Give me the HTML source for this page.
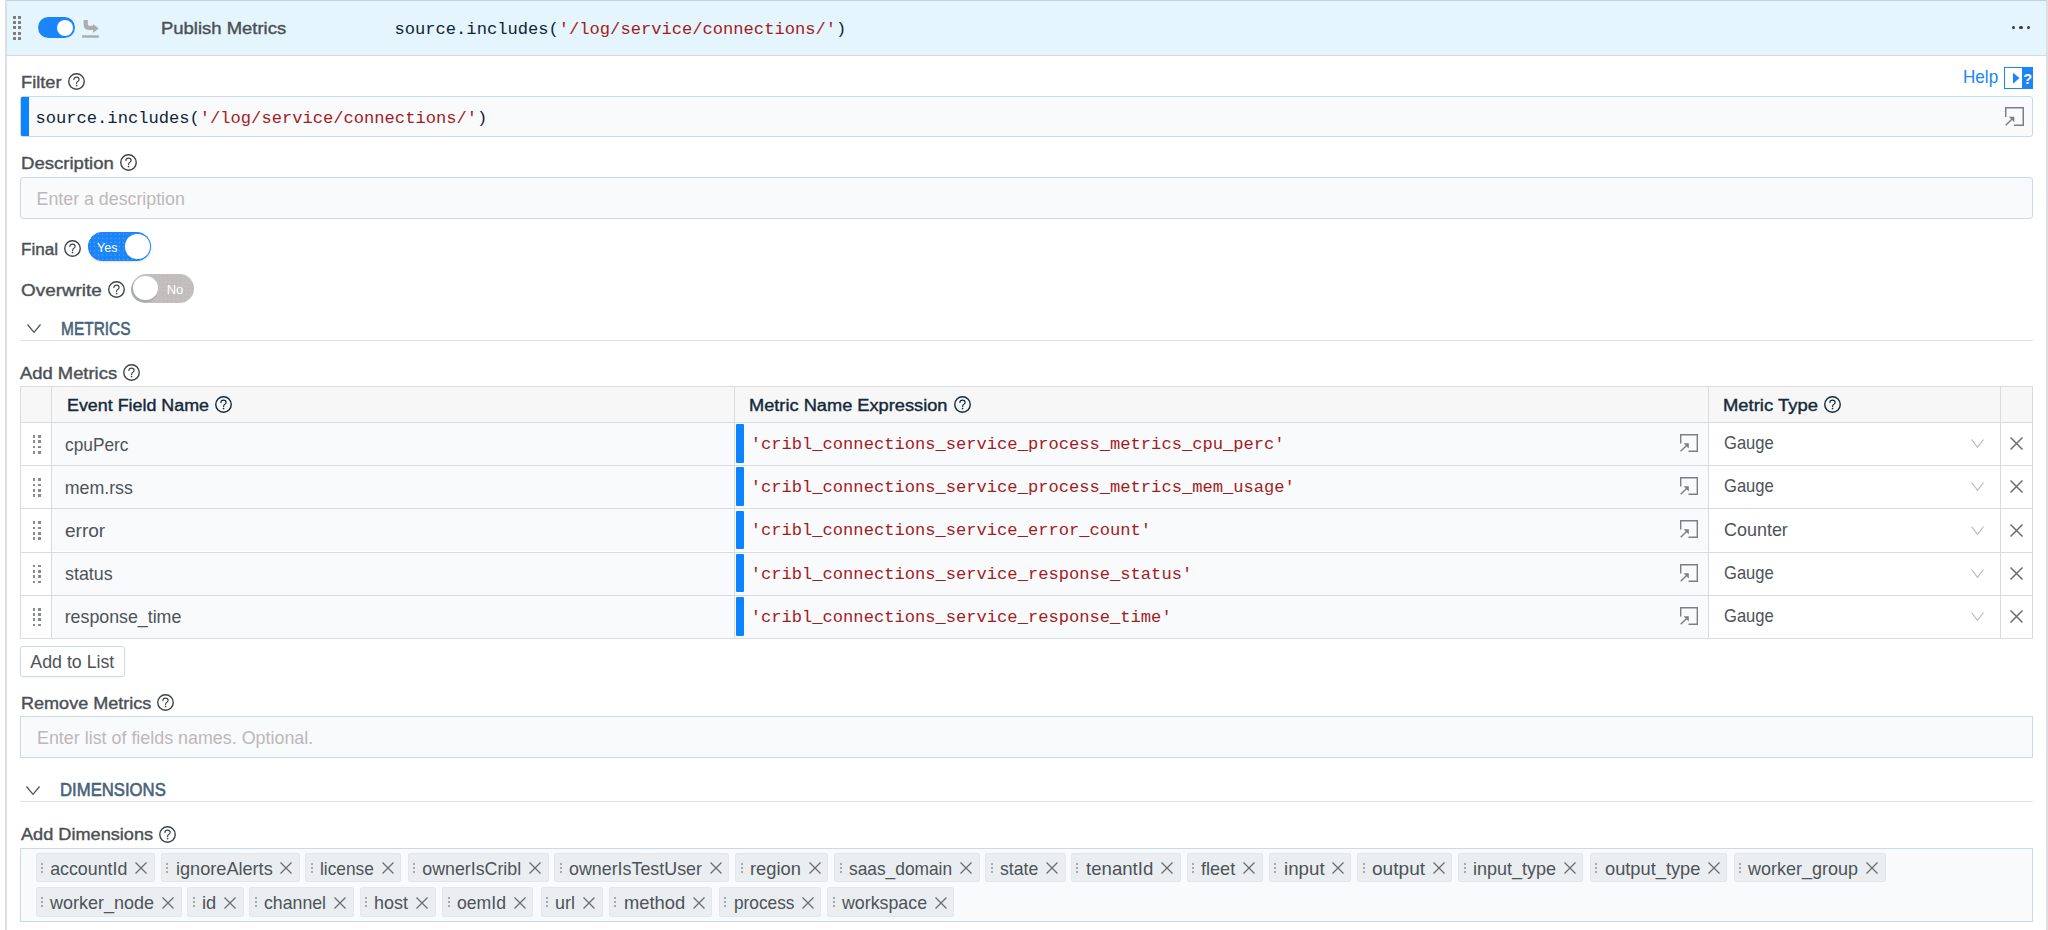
<!DOCTYPE html>
<html><head><meta charset="utf-8"><style>
html,body{margin:0;padding:0;background:#fff;width:2048px;height:930px;overflow:hidden;position:relative}
.t{position:absolute;white-space:nowrap;line-height:0;font-family:'Liberation Sans', sans-serif}
.b{position:absolute;display:block}
</style></head><body>
<div class="b" style="left:5px;top:0px;width:2px;height:930px;background:#dedfe0"></div>
<div class="b" style="left:2046px;top:0px;width:2px;height:930px;background:#dedfe0"></div>
<div class="b" style="left:7px;top:0px;width:2039px;height:55px;background:#e4f5fd"></div>
<div class="b" style="left:7px;top:0px;width:2039px;height:1px;background:#c6ced6"></div>
<div class="b" style="left:7px;top:55px;width:2039px;height:1px;background:#d6dadd"></div>
<div class="b" style="left:13px;top:16px;width:3px;height:3px;background:#7d7f81"></div>
<div class="b" style="left:13px;top:21.2px;width:3px;height:3px;background:#7d7f81"></div>
<div class="b" style="left:13px;top:26.4px;width:3px;height:3px;background:#7d7f81"></div>
<div class="b" style="left:13px;top:31.6px;width:3px;height:3px;background:#7d7f81"></div>
<div class="b" style="left:13px;top:36.8px;width:3px;height:3px;background:#7d7f81"></div>
<div class="b" style="left:18px;top:16px;width:3px;height:3px;background:#7d7f81"></div>
<div class="b" style="left:18px;top:21.2px;width:3px;height:3px;background:#7d7f81"></div>
<div class="b" style="left:18px;top:26.4px;width:3px;height:3px;background:#7d7f81"></div>
<div class="b" style="left:18px;top:31.6px;width:3px;height:3px;background:#7d7f81"></div>
<div class="b" style="left:18px;top:36.8px;width:3px;height:3px;background:#7d7f81"></div>
<div class="b" style="left:38px;top:17px;width:37px;height:21px;background:#1a84f8;border-radius:11px"></div>
<div class="b" style="left:57px;top:20px;width:16px;height:16px;background:#fff;border-radius:50%"></div>
<svg class="b" style="left:78px;top:16px" width="26" height="26" viewBox="0 0 26 26"><path d="M7.7 3.9V8.5C7.7 10.8 9.3 11.9 11.5 11.9H16" fill="none" stroke="#a9adb0" stroke-width="4.2"/><path d="M15.1 8.1L20.8 12.4L15.1 16.8Z" fill="#a9adb0"/><rect x="4.1" y="19.3" width="16.7" height="2.4" fill="#a9adb0"/></svg>
<div class="t" style="left:161.20px;top:27.90px;font-size:17.3px;color:#4b5055;font-family:'Liberation Sans', sans-serif;-webkit-text-stroke:0.4px #4b5055;transform:scaleX(1.0683);transform-origin:0 0;">Publish Metrics</div>
<div class="t" style="left:394.50px;top:30.24px;font-size:17.12px;color:#0f2536;font-family:'Liberation Mono', monospace;">source.includes(<span style="color:#a31c1c">'/log/service/connections/'</span>)</div>
<div class="b" style="left:2012px;top:25.8px;width:3.2px;height:3.2px;background:#3a3d40;border-radius:50%"></div>
<div class="b" style="left:2019.4px;top:25.8px;width:3.2px;height:3.2px;background:#3a3d40;border-radius:50%"></div>
<div class="b" style="left:2026.8px;top:25.8px;width:3.2px;height:3.2px;background:#3a3d40;border-radius:50%"></div>
<div class="t" style="left:20.90px;top:81.90px;font-size:17.3px;color:#4b5055;font-family:'Liberation Sans', sans-serif;-webkit-text-stroke:0.4px #4b5055;transform:scaleX(1.0559);transform-origin:0 0;">Filter</div>
<svg class="b" style="left:67.60px;top:72.85px" width="17" height="17" viewBox="0 0 17 17"><circle cx="8.5" cy="8.5" r="7.75" fill="none" stroke="#3f4448" stroke-width="1.4"/><path d="M5.9 6.6C5.9 5 7 4.1 8.5 4.1S11.1 5 11.1 6.4C11.1 7.7 10 8.1 9.2 8.8C8.7 9.3 8.6 9.8 8.6 10.7" fill="none" stroke="#3f4448" stroke-width="1.15" stroke-linecap="round"/><rect x="7.8" y="12" width="1.5" height="1.3" fill="#3f4448"/></svg>
<div class="t" style="left:1962.80px;top:77.03px;font-size:17.8px;color:#1a84f8;font-family:'Liberation Sans', sans-serif;transform:scaleX(0.9611);transform-origin:0 0;">Help</div>
<div class="b" style="left:2004px;top:67px;width:29px;height:22px;box-sizing:border-box;border:1.5px solid #1a84f8;background:#fff"></div>
<div class="b" style="left:2022px;top:67px;width:11px;height:22px;background:#1a84f8"></div>
<svg class="b" style="left:2004px;top:67px" width="29" height="22" viewBox="0 0 29 22"><path d="M9 5.8L15.5 11L9 16.8Z" fill="#1a84f8"/><text x="23.7" y="17.2" text-anchor="middle" font-family="Liberation Sans" font-weight="bold" font-size="14.5" fill="#fff">?</text></svg>
<div class="b" style="left:20px;top:96px;width:2013px;height:41px;box-sizing:border-box;border:1.3px solid #cbd9e2;border-radius:3px;background:#f9fafc"></div>
<div class="b" style="left:21.2px;top:97.2px;width:7.8px;height:38.6px;background:#0d84ff;border-radius:1px 0 0 1px"></div>
<div class="t" style="left:35.50px;top:118.64px;font-size:17.12px;color:#0f2536;font-family:'Liberation Mono', monospace;">source.includes(<span style="color:#a31c1c">'/log/service/connections/'</span>)</div>
<svg class="b" style="left:2005px;top:107px" width="19" height="19" viewBox="0 0 18 18"><path d="M0.7 9.5V0.7H17.3V17.3H8.5" fill="none" stroke="#7b7f83" stroke-width="1.4"/><path d="M0.7 17.3L7.6 10.4" fill="none" stroke="#7b7f83" stroke-width="1.4"/><path d="M3.6 9.2H8.8V14.4Z" fill="#7b7f83"/></svg>
<div class="t" style="left:20.70px;top:163.00px;font-size:17.3px;color:#4b5055;font-family:'Liberation Sans', sans-serif;-webkit-text-stroke:0.4px #4b5055;transform:scaleX(1.0746);transform-origin:0 0;">Description</div>
<svg class="b" style="left:119.70px;top:154.10px" width="17" height="17" viewBox="0 0 17 17"><circle cx="8.5" cy="8.5" r="7.75" fill="none" stroke="#3f4448" stroke-width="1.4"/><path d="M5.9 6.6C5.9 5 7 4.1 8.5 4.1S11.1 5 11.1 6.4C11.1 7.7 10 8.1 9.2 8.8C8.7 9.3 8.6 9.8 8.6 10.7" fill="none" stroke="#3f4448" stroke-width="1.15" stroke-linecap="round"/><rect x="7.8" y="12" width="1.5" height="1.3" fill="#3f4448"/></svg>
<div class="b" style="left:20px;top:177px;width:2013px;height:42px;box-sizing:border-box;border:1.3px solid #cbd9e2;border-radius:3px;background:#f9fafc"></div>
<div class="t" style="left:36.60px;top:198.53px;font-size:17.8px;color:#bdb8b8;font-family:'Liberation Sans', sans-serif;">Enter a description</div>
<div class="t" style="left:20.90px;top:248.50px;font-size:17.3px;color:#4b5055;font-family:'Liberation Sans', sans-serif;-webkit-text-stroke:0.4px #4b5055;transform:scaleX(0.9894);transform-origin:0 0;">Final</div>
<svg class="b" style="left:64.40px;top:239.50px" width="17" height="17" viewBox="0 0 17 17"><circle cx="8.5" cy="8.5" r="7.75" fill="none" stroke="#3f4448" stroke-width="1.4"/><path d="M5.9 6.6C5.9 5 7 4.1 8.5 4.1S11.1 5 11.1 6.4C11.1 7.7 10 8.1 9.2 8.8C8.7 9.3 8.6 9.8 8.6 10.7" fill="none" stroke="#3f4448" stroke-width="1.15" stroke-linecap="round"/><rect x="7.8" y="12" width="1.5" height="1.3" fill="#3f4448"/></svg>
<div class="b" style="left:88px;top:232px;width:63px;height:29px;background:#1a84f8 radial-gradient(rgba(255,255,255,0.35) 0.5px, transparent 0.9px) 0 0/4.2px 4.2px;border-radius:15px;box-shadow:0 1px 3px rgba(0,0,0,0.12)"></div>
<div class="b" style="left:125px;top:234.2px;width:24.5px;height:24.5px;background:#fff;border-radius:50%"></div>
<div class="t" style="left:97.40px;top:247.69px;font-size:13px;color:#fff;font-family:'Liberation Sans', sans-serif;transform:scaleX(0.9660);transform-origin:0 0;">Yes</div>
<div class="t" style="left:20.90px;top:290.20px;font-size:17.3px;color:#4b5055;font-family:'Liberation Sans', sans-serif;-webkit-text-stroke:0.4px #4b5055;transform:scaleX(1.0932);transform-origin:0 0;">Overwrite</div>
<svg class="b" style="left:107.70px;top:281.30px" width="17" height="17" viewBox="0 0 17 17"><circle cx="8.5" cy="8.5" r="7.75" fill="none" stroke="#3f4448" stroke-width="1.4"/><path d="M5.9 6.6C5.9 5 7 4.1 8.5 4.1S11.1 5 11.1 6.4C11.1 7.7 10 8.1 9.2 8.8C8.7 9.3 8.6 9.8 8.6 10.7" fill="none" stroke="#3f4448" stroke-width="1.15" stroke-linecap="round"/><rect x="7.8" y="12" width="1.5" height="1.3" fill="#3f4448"/></svg>
<div class="b" style="left:132px;top:274.3px;width:62px;height:28.5px;background:#c4bfbf radial-gradient(rgba(150,150,150,0.35) 0.5px, transparent 0.9px) 0 0/4.2px 4.2px;border-radius:15px"></div>
<div class="b" style="left:133.2px;top:276.3px;width:24.8px;height:24.2px;background:#fff;border-radius:50%;box-shadow:-1px 1.5px 0 1px #a9acae"></div>
<div class="t" style="left:166.70px;top:289.79px;font-size:13px;color:#fff;font-family:'Liberation Sans', sans-serif;">No</div>
<svg class="b" style="left:26.6px;top:323.6px" width="14" height="9" viewBox="0 0 14 9"><path d="M0.5 0.5L7.0 8.3L13.5 0.5" fill="none" stroke="#4b5563" stroke-width="1.3"/></svg>
<div class="t" style="left:60.50px;top:329.22px;font-size:18.4px;color:#48627a;font-family:'Liberation Sans', sans-serif;-webkit-text-stroke:0.6px #48627a;transform:scaleX(0.8406);transform-origin:0 0;">METRICS</div>
<div class="b" style="left:20px;top:339.5px;width:2013px;height:1.5px;background:#dde2e5"></div>
<div class="t" style="left:20.40px;top:372.50px;font-size:17.3px;color:#4b5055;font-family:'Liberation Sans', sans-serif;-webkit-text-stroke:0.4px #4b5055;transform:scaleX(1.0641);transform-origin:0 0;">Add Metrics</div>
<svg class="b" style="left:123.10px;top:364.00px" width="17" height="17" viewBox="0 0 17 17"><circle cx="8.5" cy="8.5" r="7.75" fill="none" stroke="#3f4448" stroke-width="1.4"/><path d="M5.9 6.6C5.9 5 7 4.1 8.5 4.1S11.1 5 11.1 6.4C11.1 7.7 10 8.1 9.2 8.8C8.7 9.3 8.6 9.8 8.6 10.7" fill="none" stroke="#3f4448" stroke-width="1.15" stroke-linecap="round"/><rect x="7.8" y="12" width="1.5" height="1.3" fill="#3f4448"/></svg>
<div class="b" style="left:20px;top:386px;width:2013px;height:253px;background:#fff"></div>
<div class="b" style="left:20px;top:386px;width:2013px;height:36px;background:#f7f7f8"></div>
<div class="b" style="left:51.5px;top:422px;width:682.5px;height:43.10000000000002px;background:#f9fafc"></div>
<div class="b" style="left:734px;top:422px;width:974px;height:43.10000000000002px;background:#f9fafc"></div>
<div class="b" style="left:51.5px;top:465.1px;width:682.5px;height:43.19999999999999px;background:#f9fafc"></div>
<div class="b" style="left:734px;top:465.1px;width:974px;height:43.19999999999999px;background:#f9fafc"></div>
<div class="b" style="left:51.5px;top:508.3px;width:682.5px;height:43.19999999999999px;background:#f9fafc"></div>
<div class="b" style="left:734px;top:508.3px;width:974px;height:43.19999999999999px;background:#f9fafc"></div>
<div class="b" style="left:51.5px;top:551.5px;width:682.5px;height:43.200000000000045px;background:#f9fafc"></div>
<div class="b" style="left:734px;top:551.5px;width:974px;height:43.200000000000045px;background:#f9fafc"></div>
<div class="b" style="left:51.5px;top:594.7px;width:682.5px;height:43.299999999999955px;background:#f9fafc"></div>
<div class="b" style="left:734px;top:594.7px;width:974px;height:43.299999999999955px;background:#f9fafc"></div>
<div class="b" style="left:20px;top:386px;width:2013px;height:1px;background:#d9dcdf"></div>
<div class="b" style="left:20px;top:422px;width:2013px;height:1px;background:#d9dcdf"></div>
<div class="b" style="left:20px;top:465.1px;width:2013px;height:1px;background:#d9dcdf"></div>
<div class="b" style="left:20px;top:508.3px;width:2013px;height:1px;background:#d9dcdf"></div>
<div class="b" style="left:20px;top:551.5px;width:2013px;height:1px;background:#d9dcdf"></div>
<div class="b" style="left:20px;top:594.7px;width:2013px;height:1px;background:#d9dcdf"></div>
<div class="b" style="left:20px;top:638px;width:2013px;height:1px;background:#d9dcdf"></div>
<div class="b" style="left:20px;top:386px;width:1px;height:253px;background:#d9dcdf"></div>
<div class="b" style="left:51px;top:386px;width:1px;height:253px;background:#d9dcdf"></div>
<div class="b" style="left:734px;top:386px;width:1px;height:253px;background:#d9dcdf"></div>
<div class="b" style="left:1708px;top:386px;width:1px;height:253px;background:#d9dcdf"></div>
<div class="b" style="left:2000px;top:386px;width:1px;height:253px;background:#d9dcdf"></div>
<div class="b" style="left:2032px;top:386px;width:1px;height:253px;background:#d9dcdf"></div>
<div class="t" style="left:66.50px;top:405.00px;font-size:17.3px;color:#14293a;font-family:'Liberation Sans', sans-serif;-webkit-text-stroke:0.4px #14293a;transform:scaleX(1.0342);transform-origin:0 0;">Event Field Name</div>
<svg class="b" style="left:214.80px;top:396.10px" width="17" height="17" viewBox="0 0 17 17"><circle cx="8.5" cy="8.5" r="7.75" fill="none" stroke="#14293a" stroke-width="1.4"/><path d="M5.9 6.6C5.9 5 7 4.1 8.5 4.1S11.1 5 11.1 6.4C11.1 7.7 10 8.1 9.2 8.8C8.7 9.3 8.6 9.8 8.6 10.7" fill="none" stroke="#14293a" stroke-width="1.15" stroke-linecap="round"/><rect x="7.8" y="12" width="1.5" height="1.3" fill="#14293a"/></svg>
<div class="t" style="left:748.80px;top:405.00px;font-size:17.3px;color:#14293a;font-family:'Liberation Sans', sans-serif;-webkit-text-stroke:0.4px #14293a;transform:scaleX(1.0544);transform-origin:0 0;">Metric Name Expression</div>
<svg class="b" style="left:954.00px;top:396.00px" width="17" height="17" viewBox="0 0 17 17"><circle cx="8.5" cy="8.5" r="7.75" fill="none" stroke="#14293a" stroke-width="1.4"/><path d="M5.9 6.6C5.9 5 7 4.1 8.5 4.1S11.1 5 11.1 6.4C11.1 7.7 10 8.1 9.2 8.8C8.7 9.3 8.6 9.8 8.6 10.7" fill="none" stroke="#14293a" stroke-width="1.15" stroke-linecap="round"/><rect x="7.8" y="12" width="1.5" height="1.3" fill="#14293a"/></svg>
<div class="t" style="left:1723.20px;top:405.00px;font-size:17.3px;color:#14293a;font-family:'Liberation Sans', sans-serif;-webkit-text-stroke:0.4px #14293a;transform:scaleX(1.0663);transform-origin:0 0;">Metric Type</div>
<svg class="b" style="left:1824.00px;top:396.20px" width="17" height="17" viewBox="0 0 17 17"><circle cx="8.5" cy="8.5" r="7.75" fill="none" stroke="#14293a" stroke-width="1.4"/><path d="M5.9 6.6C5.9 5 7 4.1 8.5 4.1S11.1 5 11.1 6.4C11.1 7.7 10 8.1 9.2 8.8C8.7 9.3 8.6 9.8 8.6 10.7" fill="none" stroke="#14293a" stroke-width="1.15" stroke-linecap="round"/><rect x="7.8" y="12" width="1.5" height="1.3" fill="#14293a"/></svg>
<div class="b" style="left:33px;top:435.1px;width:2.4px;height:2.8px;background:#898c8f"></div>
<div class="b" style="left:33px;top:440.4px;width:2.4px;height:2.8px;background:#898c8f"></div>
<div class="b" style="left:33px;top:445.7px;width:2.4px;height:2.8px;background:#898c8f"></div>
<div class="b" style="left:33px;top:451.0px;width:2.4px;height:2.8px;background:#898c8f"></div>
<div class="b" style="left:38.2px;top:435.1px;width:2.8px;height:2.8px;background:#898c8f"></div>
<div class="b" style="left:38.2px;top:440.4px;width:2.8px;height:2.8px;background:#898c8f"></div>
<div class="b" style="left:38.2px;top:445.7px;width:2.8px;height:2.8px;background:#898c8f"></div>
<div class="b" style="left:38.2px;top:451.0px;width:2.8px;height:2.8px;background:#898c8f"></div>
<div class="t" style="left:64.70px;top:444.63px;font-size:17.8px;color:#4d5358;font-family:'Liberation Sans', sans-serif;transform:scaleX(0.9727);transform-origin:0 0;">cpuPerc</div>
<div class="b" style="left:736px;top:424.2px;width:8px;height:38.8px;background:#0d84ff;border-radius:1px"></div>
<div class="t" style="left:750.70px;top:445.14px;font-size:17.12px;color:#a31c1c;font-family:'Liberation Mono', monospace;">'cribl_connections_service_process_metrics_cpu_perc'</div>
<svg class="b" style="left:1680px;top:434px" width="18" height="18" viewBox="0 0 18 18"><path d="M0.7 9.5V0.7H17.3V17.3H8.5" fill="none" stroke="#7b7f83" stroke-width="1.4"/><path d="M0.7 17.3L7.6 10.4" fill="none" stroke="#7b7f83" stroke-width="1.4"/><path d="M3.6 9.2H8.8V14.4Z" fill="#7b7f83"/></svg>
<div class="t" style="left:1724.20px;top:443.33px;font-size:17.8px;color:#4d5358;font-family:'Liberation Sans', sans-serif;transform:scaleX(0.9318);transform-origin:0 0;">Gauge</div>
<svg class="b" style="left:1971px;top:439.2px" width="13" height="9" viewBox="0 0 13 9"><path d="M0.5 0.5L6.5 8.3L12.5 0.5" fill="none" stroke="#b9b4b4" stroke-width="1.1"/></svg>
<svg class="b" style="left:2010px;top:437.3px" width="13" height="13" viewBox="0 0 13 13"><path d="M0.5 0.5L12.5 12.5M12.5 0.5L0.5 12.5" fill="none" stroke="#6b6e71" stroke-width="1.5"/></svg>
<div class="b" style="left:33px;top:478.2px;width:2.4px;height:2.8px;background:#898c8f"></div>
<div class="b" style="left:33px;top:483.5px;width:2.4px;height:2.8px;background:#898c8f"></div>
<div class="b" style="left:33px;top:488.8px;width:2.4px;height:2.8px;background:#898c8f"></div>
<div class="b" style="left:33px;top:494.1px;width:2.4px;height:2.8px;background:#898c8f"></div>
<div class="b" style="left:38.2px;top:478.2px;width:2.8px;height:2.8px;background:#898c8f"></div>
<div class="b" style="left:38.2px;top:483.5px;width:2.8px;height:2.8px;background:#898c8f"></div>
<div class="b" style="left:38.2px;top:488.8px;width:2.8px;height:2.8px;background:#898c8f"></div>
<div class="b" style="left:38.2px;top:494.1px;width:2.8px;height:2.8px;background:#898c8f"></div>
<div class="t" style="left:64.70px;top:487.73px;font-size:17.8px;color:#4d5358;font-family:'Liberation Sans', sans-serif;">mem.rss</div>
<div class="b" style="left:736px;top:467.3px;width:8px;height:38.8px;background:#0d84ff;border-radius:1px"></div>
<div class="t" style="left:750.70px;top:488.24px;font-size:17.12px;color:#a31c1c;font-family:'Liberation Mono', monospace;">'cribl_connections_service_process_metrics_mem_usage'</div>
<svg class="b" style="left:1680px;top:477px" width="18" height="18" viewBox="0 0 18 18"><path d="M0.7 9.5V0.7H17.3V17.3H8.5" fill="none" stroke="#7b7f83" stroke-width="1.4"/><path d="M0.7 17.3L7.6 10.4" fill="none" stroke="#7b7f83" stroke-width="1.4"/><path d="M3.6 9.2H8.8V14.4Z" fill="#7b7f83"/></svg>
<div class="t" style="left:1724.20px;top:486.43px;font-size:17.8px;color:#4d5358;font-family:'Liberation Sans', sans-serif;transform:scaleX(0.9318);transform-origin:0 0;">Gauge</div>
<svg class="b" style="left:1971px;top:482.3px" width="13" height="9" viewBox="0 0 13 9"><path d="M0.5 0.5L6.5 8.3L12.5 0.5" fill="none" stroke="#b9b4b4" stroke-width="1.1"/></svg>
<svg class="b" style="left:2010px;top:480.40000000000003px" width="13" height="13" viewBox="0 0 13 13"><path d="M0.5 0.5L12.5 12.5M12.5 0.5L0.5 12.5" fill="none" stroke="#6b6e71" stroke-width="1.5"/></svg>
<div class="b" style="left:33px;top:521.4px;width:2.4px;height:2.8px;background:#898c8f"></div>
<div class="b" style="left:33px;top:526.7px;width:2.4px;height:2.8px;background:#898c8f"></div>
<div class="b" style="left:33px;top:532.0px;width:2.4px;height:2.8px;background:#898c8f"></div>
<div class="b" style="left:33px;top:537.3px;width:2.4px;height:2.8px;background:#898c8f"></div>
<div class="b" style="left:38.2px;top:521.4px;width:2.8px;height:2.8px;background:#898c8f"></div>
<div class="b" style="left:38.2px;top:526.7px;width:2.8px;height:2.8px;background:#898c8f"></div>
<div class="b" style="left:38.2px;top:532.0px;width:2.8px;height:2.8px;background:#898c8f"></div>
<div class="b" style="left:38.2px;top:537.3px;width:2.8px;height:2.8px;background:#898c8f"></div>
<div class="t" style="left:64.70px;top:530.93px;font-size:17.8px;color:#4d5358;font-family:'Liberation Sans', sans-serif;transform:scaleX(1.0691);transform-origin:0 0;">error</div>
<div class="b" style="left:736px;top:510.5px;width:8px;height:38.8px;background:#0d84ff;border-radius:1px"></div>
<div class="t" style="left:750.70px;top:531.44px;font-size:17.12px;color:#a31c1c;font-family:'Liberation Mono', monospace;">'cribl_connections_service_error_count'</div>
<svg class="b" style="left:1680px;top:520px" width="18" height="18" viewBox="0 0 18 18"><path d="M0.7 9.5V0.7H17.3V17.3H8.5" fill="none" stroke="#7b7f83" stroke-width="1.4"/><path d="M0.7 17.3L7.6 10.4" fill="none" stroke="#7b7f83" stroke-width="1.4"/><path d="M3.6 9.2H8.8V14.4Z" fill="#7b7f83"/></svg>
<div class="t" style="left:1724.20px;top:529.63px;font-size:17.8px;color:#4d5358;font-family:'Liberation Sans', sans-serif;transform:scaleX(1.0091);transform-origin:0 0;">Counter</div>
<svg class="b" style="left:1971px;top:525.5px" width="13" height="9" viewBox="0 0 13 9"><path d="M0.5 0.5L6.5 8.3L12.5 0.5" fill="none" stroke="#b9b4b4" stroke-width="1.1"/></svg>
<svg class="b" style="left:2010px;top:523.6px" width="13" height="13" viewBox="0 0 13 13"><path d="M0.5 0.5L12.5 12.5M12.5 0.5L0.5 12.5" fill="none" stroke="#6b6e71" stroke-width="1.5"/></svg>
<div class="b" style="left:33px;top:564.6px;width:2.4px;height:2.8px;background:#898c8f"></div>
<div class="b" style="left:33px;top:569.9px;width:2.4px;height:2.8px;background:#898c8f"></div>
<div class="b" style="left:33px;top:575.2px;width:2.4px;height:2.8px;background:#898c8f"></div>
<div class="b" style="left:33px;top:580.5px;width:2.4px;height:2.8px;background:#898c8f"></div>
<div class="b" style="left:38.2px;top:564.6px;width:2.8px;height:2.8px;background:#898c8f"></div>
<div class="b" style="left:38.2px;top:569.9px;width:2.8px;height:2.8px;background:#898c8f"></div>
<div class="b" style="left:38.2px;top:575.2px;width:2.8px;height:2.8px;background:#898c8f"></div>
<div class="b" style="left:38.2px;top:580.5px;width:2.8px;height:2.8px;background:#898c8f"></div>
<div class="t" style="left:64.70px;top:574.13px;font-size:17.8px;color:#4d5358;font-family:'Liberation Sans', sans-serif;transform:scaleX(1.0046);transform-origin:0 0;">status</div>
<div class="b" style="left:736px;top:553.7px;width:8px;height:38.8px;background:#0d84ff;border-radius:1px"></div>
<div class="t" style="left:750.70px;top:574.64px;font-size:17.12px;color:#a31c1c;font-family:'Liberation Mono', monospace;">'cribl_connections_service_response_status'</div>
<svg class="b" style="left:1680px;top:564px" width="18" height="18" viewBox="0 0 18 18"><path d="M0.7 9.5V0.7H17.3V17.3H8.5" fill="none" stroke="#7b7f83" stroke-width="1.4"/><path d="M0.7 17.3L7.6 10.4" fill="none" stroke="#7b7f83" stroke-width="1.4"/><path d="M3.6 9.2H8.8V14.4Z" fill="#7b7f83"/></svg>
<div class="t" style="left:1724.20px;top:572.83px;font-size:17.8px;color:#4d5358;font-family:'Liberation Sans', sans-serif;transform:scaleX(0.9318);transform-origin:0 0;">Gauge</div>
<svg class="b" style="left:1971px;top:568.7px" width="13" height="9" viewBox="0 0 13 9"><path d="M0.5 0.5L6.5 8.3L12.5 0.5" fill="none" stroke="#b9b4b4" stroke-width="1.1"/></svg>
<svg class="b" style="left:2010px;top:566.8px" width="13" height="13" viewBox="0 0 13 13"><path d="M0.5 0.5L12.5 12.5M12.5 0.5L0.5 12.5" fill="none" stroke="#6b6e71" stroke-width="1.5"/></svg>
<div class="b" style="left:33px;top:607.8px;width:2.4px;height:2.8px;background:#898c8f"></div>
<div class="b" style="left:33px;top:613.1px;width:2.4px;height:2.8px;background:#898c8f"></div>
<div class="b" style="left:33px;top:618.4px;width:2.4px;height:2.8px;background:#898c8f"></div>
<div class="b" style="left:33px;top:623.7px;width:2.4px;height:2.8px;background:#898c8f"></div>
<div class="b" style="left:38.2px;top:607.8px;width:2.8px;height:2.8px;background:#898c8f"></div>
<div class="b" style="left:38.2px;top:613.1px;width:2.8px;height:2.8px;background:#898c8f"></div>
<div class="b" style="left:38.2px;top:618.4px;width:2.8px;height:2.8px;background:#898c8f"></div>
<div class="b" style="left:38.2px;top:623.7px;width:2.8px;height:2.8px;background:#898c8f"></div>
<div class="t" style="left:64.70px;top:617.33px;font-size:17.8px;color:#4d5358;font-family:'Liberation Sans', sans-serif;">response_time</div>
<div class="b" style="left:736px;top:596.9000000000001px;width:8px;height:38.8px;background:#0d84ff;border-radius:1px"></div>
<div class="t" style="left:750.70px;top:617.84px;font-size:17.12px;color:#a31c1c;font-family:'Liberation Mono', monospace;">'cribl_connections_service_response_time'</div>
<svg class="b" style="left:1680px;top:607px" width="18" height="18" viewBox="0 0 18 18"><path d="M0.7 9.5V0.7H17.3V17.3H8.5" fill="none" stroke="#7b7f83" stroke-width="1.4"/><path d="M0.7 17.3L7.6 10.4" fill="none" stroke="#7b7f83" stroke-width="1.4"/><path d="M3.6 9.2H8.8V14.4Z" fill="#7b7f83"/></svg>
<div class="t" style="left:1724.20px;top:616.03px;font-size:17.8px;color:#4d5358;font-family:'Liberation Sans', sans-serif;transform:scaleX(0.9318);transform-origin:0 0;">Gauge</div>
<svg class="b" style="left:1971px;top:611.9000000000001px" width="13" height="9" viewBox="0 0 13 9"><path d="M0.5 0.5L6.5 8.3L12.5 0.5" fill="none" stroke="#b9b4b4" stroke-width="1.1"/></svg>
<svg class="b" style="left:2010px;top:610.0px" width="13" height="13" viewBox="0 0 13 13"><path d="M0.5 0.5L12.5 12.5M12.5 0.5L0.5 12.5" fill="none" stroke="#6b6e71" stroke-width="1.5"/></svg>
<div class="b" style="left:20px;top:646px;width:105px;height:31px;box-sizing:border-box;border:1px solid #cfdbe3;border-radius:3px;background:#fff;box-shadow:0 1px 2px rgba(0,0,0,0.05)"></div>
<div class="t" style="left:30.30px;top:662.33px;font-size:17.8px;color:#4d5358;font-family:'Liberation Sans', sans-serif;">Add to List</div>
<div class="t" style="left:20.60px;top:702.80px;font-size:17.3px;color:#4b5055;font-family:'Liberation Sans', sans-serif;-webkit-text-stroke:0.4px #4b5055;transform:scaleX(1.0441);transform-origin:0 0;">Remove Metrics</div>
<svg class="b" style="left:157.40px;top:693.50px" width="17" height="17" viewBox="0 0 17 17"><circle cx="8.5" cy="8.5" r="7.75" fill="none" stroke="#3f4448" stroke-width="1.4"/><path d="M5.9 6.6C5.9 5 7 4.1 8.5 4.1S11.1 5 11.1 6.4C11.1 7.7 10 8.1 9.2 8.8C8.7 9.3 8.6 9.8 8.6 10.7" fill="none" stroke="#3f4448" stroke-width="1.15" stroke-linecap="round"/><rect x="7.8" y="12" width="1.5" height="1.3" fill="#3f4448"/></svg>
<div class="b" style="left:20px;top:716px;width:2013px;height:41.700000000000045px;box-sizing:border-box;border:1.3px solid #cbd9e2;border-radius:0px;background:#f9fafc"></div>
<div class="t" style="left:36.50px;top:737.83px;font-size:17.8px;color:#bdb8b8;font-family:'Liberation Sans', sans-serif;transform:scaleX(1.0053);transform-origin:0 0;">Enter list of fields names. Optional.</div>
<svg class="b" style="left:26.4px;top:786px" width="14" height="9" viewBox="0 0 14 9"><path d="M0.5 0.5L7.0 8.3L13.5 0.5" fill="none" stroke="#4b5563" stroke-width="1.3"/></svg>
<div class="t" style="left:60.30px;top:790.12px;font-size:18.4px;color:#48627a;font-family:'Liberation Sans', sans-serif;-webkit-text-stroke:0.6px #48627a;transform:scaleX(0.9085);transform-origin:0 0;">DIMENSIONS</div>
<div class="b" style="left:20px;top:800.5px;width:2013px;height:1.5px;background:#dde2e5"></div>
<div class="t" style="left:20.60px;top:834.40px;font-size:17.3px;color:#4b5055;font-family:'Liberation Sans', sans-serif;-webkit-text-stroke:0.4px #4b5055;transform:scaleX(1.0501);transform-origin:0 0;">Add Dimensions</div>
<svg class="b" style="left:158.70px;top:825.50px" width="17" height="17" viewBox="0 0 17 17"><circle cx="8.5" cy="8.5" r="7.75" fill="none" stroke="#3f4448" stroke-width="1.4"/><path d="M5.9 6.6C5.9 5 7 4.1 8.5 4.1S11.1 5 11.1 6.4C11.1 7.7 10 8.1 9.2 8.8C8.7 9.3 8.6 9.8 8.6 10.7" fill="none" stroke="#3f4448" stroke-width="1.15" stroke-linecap="round"/><rect x="7.8" y="12" width="1.5" height="1.3" fill="#3f4448"/></svg>
<div class="b" style="left:20px;top:848px;width:2013px;height:73.70000000000005px;box-sizing:border-box;border:1.3px solid #cbd9e2;border-radius:0px;background:#f9fafc"></div>
<div class="b" style="left:35.5px;top:853.2px;width:119.4px;height:29.3px;background:#eaeef1;border-radius:3px;box-shadow:inset 0 0 0 1px #e3e7ea"></div>
<div class="b" style="left:40.8px;top:863.0px;width:2px;height:2px;background:#909396;border-radius:50%"></div>
<div class="b" style="left:40.8px;top:867.0px;width:2px;height:2px;background:#909396;border-radius:50%"></div>
<div class="b" style="left:40.8px;top:871.0px;width:2px;height:2px;background:#909396;border-radius:50%"></div>
<div class="t" style="left:50.20px;top:868.73px;font-size:17.8px;color:#4d5358;font-family:'Liberation Sans', sans-serif;">accountId</div>
<svg class="b" style="left:135.4px;top:862.4000000000001px" width="12" height="12" viewBox="0 0 12 12"><path d="M0.5 0.5L11.5 11.5M11.5 0.5L0.5 11.5" fill="none" stroke="#6b6e71" stroke-width="1.3"/></svg>
<div class="b" style="left:161px;top:853.2px;width:138.9px;height:29.3px;background:#eaeef1;border-radius:3px;box-shadow:inset 0 0 0 1px #e3e7ea"></div>
<div class="b" style="left:166.3px;top:863.0px;width:2px;height:2px;background:#909396;border-radius:50%"></div>
<div class="b" style="left:166.3px;top:867.0px;width:2px;height:2px;background:#909396;border-radius:50%"></div>
<div class="b" style="left:166.3px;top:871.0px;width:2px;height:2px;background:#909396;border-radius:50%"></div>
<div class="t" style="left:175.70px;top:868.73px;font-size:17.8px;color:#4d5358;font-family:'Liberation Sans', sans-serif;transform:scaleX(1.0193);transform-origin:0 0;">ignoreAlerts</div>
<svg class="b" style="left:280.4px;top:862.4000000000001px" width="12" height="12" viewBox="0 0 12 12"><path d="M0.5 0.5L11.5 11.5M11.5 0.5L0.5 11.5" fill="none" stroke="#6b6e71" stroke-width="1.3"/></svg>
<div class="b" style="left:305.4px;top:853.2px;width:96.0px;height:29.3px;background:#eaeef1;border-radius:3px;box-shadow:inset 0 0 0 1px #e3e7ea"></div>
<div class="b" style="left:310.7px;top:863.0px;width:2px;height:2px;background:#909396;border-radius:50%"></div>
<div class="b" style="left:310.7px;top:867.0px;width:2px;height:2px;background:#909396;border-radius:50%"></div>
<div class="b" style="left:310.7px;top:871.0px;width:2px;height:2px;background:#909396;border-radius:50%"></div>
<div class="t" style="left:320.10px;top:868.73px;font-size:17.8px;color:#4d5358;font-family:'Liberation Sans', sans-serif;transform:scaleX(0.9729);transform-origin:0 0;">license</div>
<svg class="b" style="left:381.9px;top:862.4000000000001px" width="12" height="12" viewBox="0 0 12 12"><path d="M0.5 0.5L11.5 11.5M11.5 0.5L0.5 11.5" fill="none" stroke="#6b6e71" stroke-width="1.3"/></svg>
<div class="b" style="left:407.6px;top:853.2px;width:141.0px;height:29.3px;background:#eaeef1;border-radius:3px;box-shadow:inset 0 0 0 1px #e3e7ea"></div>
<div class="b" style="left:412.90000000000003px;top:863.0px;width:2px;height:2px;background:#909396;border-radius:50%"></div>
<div class="b" style="left:412.90000000000003px;top:867.0px;width:2px;height:2px;background:#909396;border-radius:50%"></div>
<div class="b" style="left:412.90000000000003px;top:871.0px;width:2px;height:2px;background:#909396;border-radius:50%"></div>
<div class="t" style="left:422.30px;top:868.73px;font-size:17.8px;color:#4d5358;font-family:'Liberation Sans', sans-serif;">ownerIsCribl</div>
<svg class="b" style="left:529.1px;top:862.4000000000001px" width="12" height="12" viewBox="0 0 12 12"><path d="M0.5 0.5L11.5 11.5M11.5 0.5L0.5 11.5" fill="none" stroke="#6b6e71" stroke-width="1.3"/></svg>
<div class="b" style="left:554.3px;top:853.2px;width:175.2px;height:29.3px;background:#eaeef1;border-radius:3px;box-shadow:inset 0 0 0 1px #e3e7ea"></div>
<div class="b" style="left:559.5999999999999px;top:863.0px;width:2px;height:2px;background:#909396;border-radius:50%"></div>
<div class="b" style="left:559.5999999999999px;top:867.0px;width:2px;height:2px;background:#909396;border-radius:50%"></div>
<div class="b" style="left:559.5999999999999px;top:871.0px;width:2px;height:2px;background:#909396;border-radius:50%"></div>
<div class="t" style="left:569.00px;top:868.73px;font-size:17.8px;color:#4d5358;font-family:'Liberation Sans', sans-serif;transform:scaleX(1.0040);transform-origin:0 0;">ownerIsTestUser</div>
<svg class="b" style="left:710.0px;top:862.4000000000001px" width="12" height="12" viewBox="0 0 12 12"><path d="M0.5 0.5L11.5 11.5M11.5 0.5L0.5 11.5" fill="none" stroke="#6b6e71" stroke-width="1.3"/></svg>
<div class="b" style="left:735.2px;top:853.2px;width:93.1px;height:29.3px;background:#eaeef1;border-radius:3px;box-shadow:inset 0 0 0 1px #e3e7ea"></div>
<div class="b" style="left:740.5px;top:863.0px;width:2px;height:2px;background:#909396;border-radius:50%"></div>
<div class="b" style="left:740.5px;top:867.0px;width:2px;height:2px;background:#909396;border-radius:50%"></div>
<div class="b" style="left:740.5px;top:871.0px;width:2px;height:2px;background:#909396;border-radius:50%"></div>
<div class="t" style="left:749.90px;top:868.73px;font-size:17.8px;color:#4d5358;font-family:'Liberation Sans', sans-serif;transform:scaleX(1.0306);transform-origin:0 0;">region</div>
<svg class="b" style="left:808.8px;top:862.4000000000001px" width="12" height="12" viewBox="0 0 12 12"><path d="M0.5 0.5L11.5 11.5M11.5 0.5L0.5 11.5" fill="none" stroke="#6b6e71" stroke-width="1.3"/></svg>
<div class="b" style="left:834.4px;top:853.2px;width:145.3px;height:29.3px;background:#eaeef1;border-radius:3px;box-shadow:inset 0 0 0 1px #e3e7ea"></div>
<div class="b" style="left:839.6999999999999px;top:863.0px;width:2px;height:2px;background:#909396;border-radius:50%"></div>
<div class="b" style="left:839.6999999999999px;top:867.0px;width:2px;height:2px;background:#909396;border-radius:50%"></div>
<div class="b" style="left:839.6999999999999px;top:871.0px;width:2px;height:2px;background:#909396;border-radius:50%"></div>
<div class="t" style="left:849.10px;top:868.73px;font-size:17.8px;color:#4d5358;font-family:'Liberation Sans', sans-serif;transform:scaleX(0.9748);transform-origin:0 0;">saas_domain</div>
<svg class="b" style="left:960.2px;top:862.4000000000001px" width="12" height="12" viewBox="0 0 12 12"><path d="M0.5 0.5L11.5 11.5M11.5 0.5L0.5 11.5" fill="none" stroke="#6b6e71" stroke-width="1.3"/></svg>
<div class="b" style="left:985.3px;top:853.2px;width:80.4px;height:29.3px;background:#eaeef1;border-radius:3px;box-shadow:inset 0 0 0 1px #e3e7ea"></div>
<div class="b" style="left:990.5999999999999px;top:863.0px;width:2px;height:2px;background:#909396;border-radius:50%"></div>
<div class="b" style="left:990.5999999999999px;top:867.0px;width:2px;height:2px;background:#909396;border-radius:50%"></div>
<div class="b" style="left:990.5999999999999px;top:871.0px;width:2px;height:2px;background:#909396;border-radius:50%"></div>
<div class="t" style="left:1000.00px;top:868.73px;font-size:17.8px;color:#4d5358;font-family:'Liberation Sans', sans-serif;transform:scaleX(0.9927);transform-origin:0 0;">state</div>
<svg class="b" style="left:1046.2px;top:862.4000000000001px" width="12" height="12" viewBox="0 0 12 12"><path d="M0.5 0.5L11.5 11.5M11.5 0.5L0.5 11.5" fill="none" stroke="#6b6e71" stroke-width="1.3"/></svg>
<div class="b" style="left:1071px;top:853.2px;width:109.5px;height:29.3px;background:#eaeef1;border-radius:3px;box-shadow:inset 0 0 0 1px #e3e7ea"></div>
<div class="b" style="left:1076.3px;top:863.0px;width:2px;height:2px;background:#909396;border-radius:50%"></div>
<div class="b" style="left:1076.3px;top:867.0px;width:2px;height:2px;background:#909396;border-radius:50%"></div>
<div class="b" style="left:1076.3px;top:871.0px;width:2px;height:2px;background:#909396;border-radius:50%"></div>
<div class="t" style="left:1085.70px;top:868.73px;font-size:17.8px;color:#4d5358;font-family:'Liberation Sans', sans-serif;transform:scaleX(1.0474);transform-origin:0 0;">tenantId</div>
<svg class="b" style="left:1161.0px;top:862.4000000000001px" width="12" height="12" viewBox="0 0 12 12"><path d="M0.5 0.5L11.5 11.5M11.5 0.5L0.5 11.5" fill="none" stroke="#6b6e71" stroke-width="1.3"/></svg>
<div class="b" style="left:1186.5px;top:853.2px;width:76.3px;height:29.3px;background:#eaeef1;border-radius:3px;box-shadow:inset 0 0 0 1px #e3e7ea"></div>
<div class="b" style="left:1191.8px;top:863.0px;width:2px;height:2px;background:#909396;border-radius:50%"></div>
<div class="b" style="left:1191.8px;top:867.0px;width:2px;height:2px;background:#909396;border-radius:50%"></div>
<div class="b" style="left:1191.8px;top:871.0px;width:2px;height:2px;background:#909396;border-radius:50%"></div>
<div class="t" style="left:1201.20px;top:868.73px;font-size:17.8px;color:#4d5358;font-family:'Liberation Sans', sans-serif;transform:scaleX(1.0166);transform-origin:0 0;">fleet</div>
<svg class="b" style="left:1243.3px;top:862.4000000000001px" width="12" height="12" viewBox="0 0 12 12"><path d="M0.5 0.5L11.5 11.5M11.5 0.5L0.5 11.5" fill="none" stroke="#6b6e71" stroke-width="1.3"/></svg>
<div class="b" style="left:1268.8px;top:853.2px;width:82.7px;height:29.3px;background:#eaeef1;border-radius:3px;box-shadow:inset 0 0 0 1px #e3e7ea"></div>
<div class="b" style="left:1274.1px;top:863.0px;width:2px;height:2px;background:#909396;border-radius:50%"></div>
<div class="b" style="left:1274.1px;top:867.0px;width:2px;height:2px;background:#909396;border-radius:50%"></div>
<div class="b" style="left:1274.1px;top:871.0px;width:2px;height:2px;background:#909396;border-radius:50%"></div>
<div class="t" style="left:1283.50px;top:868.73px;font-size:17.8px;color:#4d5358;font-family:'Liberation Sans', sans-serif;transform:scaleX(1.0523);transform-origin:0 0;">input</div>
<svg class="b" style="left:1332.0px;top:862.4000000000001px" width="12" height="12" viewBox="0 0 12 12"><path d="M0.5 0.5L11.5 11.5M11.5 0.5L0.5 11.5" fill="none" stroke="#6b6e71" stroke-width="1.3"/></svg>
<div class="b" style="left:1357.3px;top:853.2px;width:95.2px;height:29.3px;background:#eaeef1;border-radius:3px;box-shadow:inset 0 0 0 1px #e3e7ea"></div>
<div class="b" style="left:1362.6px;top:863.0px;width:2px;height:2px;background:#909396;border-radius:50%"></div>
<div class="b" style="left:1362.6px;top:867.0px;width:2px;height:2px;background:#909396;border-radius:50%"></div>
<div class="b" style="left:1362.6px;top:871.0px;width:2px;height:2px;background:#909396;border-radius:50%"></div>
<div class="t" style="left:1372.00px;top:868.73px;font-size:17.8px;color:#4d5358;font-family:'Liberation Sans', sans-serif;transform:scaleX(1.0731);transform-origin:0 0;">output</div>
<svg class="b" style="left:1433.0px;top:862.4000000000001px" width="12" height="12" viewBox="0 0 12 12"><path d="M0.5 0.5L11.5 11.5M11.5 0.5L0.5 11.5" fill="none" stroke="#6b6e71" stroke-width="1.3"/></svg>
<div class="b" style="left:1458.3px;top:853.2px;width:125.2px;height:29.3px;background:#eaeef1;border-radius:3px;box-shadow:inset 0 0 0 1px #e3e7ea"></div>
<div class="b" style="left:1463.6px;top:863.0px;width:2px;height:2px;background:#909396;border-radius:50%"></div>
<div class="b" style="left:1463.6px;top:867.0px;width:2px;height:2px;background:#909396;border-radius:50%"></div>
<div class="b" style="left:1463.6px;top:871.0px;width:2px;height:2px;background:#909396;border-radius:50%"></div>
<div class="t" style="left:1473.00px;top:868.73px;font-size:17.8px;color:#4d5358;font-family:'Liberation Sans', sans-serif;transform:scaleX(1.0116);transform-origin:0 0;">input_type</div>
<svg class="b" style="left:1564.0px;top:862.4000000000001px" width="12" height="12" viewBox="0 0 12 12"><path d="M0.5 0.5L11.5 11.5M11.5 0.5L0.5 11.5" fill="none" stroke="#6b6e71" stroke-width="1.3"/></svg>
<div class="b" style="left:1589.8px;top:853.2px;width:137.6px;height:29.3px;background:#eaeef1;border-radius:3px;box-shadow:inset 0 0 0 1px #e3e7ea"></div>
<div class="b" style="left:1595.1px;top:863.0px;width:2px;height:2px;background:#909396;border-radius:50%"></div>
<div class="b" style="left:1595.1px;top:867.0px;width:2px;height:2px;background:#909396;border-radius:50%"></div>
<div class="b" style="left:1595.1px;top:871.0px;width:2px;height:2px;background:#909396;border-radius:50%"></div>
<div class="t" style="left:1604.50px;top:868.73px;font-size:17.8px;color:#4d5358;font-family:'Liberation Sans', sans-serif;transform:scaleX(1.0263);transform-origin:0 0;">output_type</div>
<svg class="b" style="left:1707.9px;top:862.4000000000001px" width="12" height="12" viewBox="0 0 12 12"><path d="M0.5 0.5L11.5 11.5M11.5 0.5L0.5 11.5" fill="none" stroke="#6b6e71" stroke-width="1.3"/></svg>
<div class="b" style="left:1733.6px;top:853.2px;width:152.2px;height:29.3px;background:#eaeef1;border-radius:3px;box-shadow:inset 0 0 0 1px #e3e7ea"></div>
<div class="b" style="left:1738.8999999999999px;top:863.0px;width:2px;height:2px;background:#909396;border-radius:50%"></div>
<div class="b" style="left:1738.8999999999999px;top:867.0px;width:2px;height:2px;background:#909396;border-radius:50%"></div>
<div class="b" style="left:1738.8999999999999px;top:871.0px;width:2px;height:2px;background:#909396;border-radius:50%"></div>
<div class="t" style="left:1748.34px;top:868.73px;font-size:17.8px;color:#4d5358;font-family:'Liberation Sans', sans-serif;transform:scaleX(1.0111);transform-origin:0 0;">worker_group</div>
<svg class="b" style="left:1866.3px;top:862.4000000000001px" width="12" height="12" viewBox="0 0 12 12"><path d="M0.5 0.5L11.5 11.5M11.5 0.5L0.5 11.5" fill="none" stroke="#6b6e71" stroke-width="1.3"/></svg>
<div class="b" style="left:35.5px;top:887.4px;width:146.2px;height:29.3px;background:#eaeef1;border-radius:3px;box-shadow:inset 0 0 0 1px #e3e7ea"></div>
<div class="b" style="left:40.8px;top:897.1999999999999px;width:2px;height:2px;background:#909396;border-radius:50%"></div>
<div class="b" style="left:40.8px;top:901.1999999999999px;width:2px;height:2px;background:#909396;border-radius:50%"></div>
<div class="b" style="left:40.8px;top:905.1999999999999px;width:2px;height:2px;background:#909396;border-radius:50%"></div>
<div class="t" style="left:50.24px;top:902.93px;font-size:17.8px;color:#4d5358;font-family:'Liberation Sans', sans-serif;transform:scaleX(1.0109);transform-origin:0 0;">worker_node</div>
<svg class="b" style="left:162.2px;top:896.6px" width="12" height="12" viewBox="0 0 12 12"><path d="M0.5 0.5L11.5 11.5M11.5 0.5L0.5 11.5" fill="none" stroke="#6b6e71" stroke-width="1.3"/></svg>
<div class="b" style="left:187.3px;top:887.4px;width:56.3px;height:29.3px;background:#eaeef1;border-radius:3px;box-shadow:inset 0 0 0 1px #e3e7ea"></div>
<div class="b" style="left:192.60000000000002px;top:897.1999999999999px;width:2px;height:2px;background:#909396;border-radius:50%"></div>
<div class="b" style="left:192.60000000000002px;top:901.1999999999999px;width:2px;height:2px;background:#909396;border-radius:50%"></div>
<div class="b" style="left:192.60000000000002px;top:905.1999999999999px;width:2px;height:2px;background:#909396;border-radius:50%"></div>
<div class="t" style="left:202.00px;top:902.93px;font-size:17.8px;color:#4d5358;font-family:'Liberation Sans', sans-serif;transform:scaleX(1.0260);transform-origin:0 0;">id</div>
<svg class="b" style="left:224.1px;top:896.6px" width="12" height="12" viewBox="0 0 12 12"><path d="M0.5 0.5L11.5 11.5M11.5 0.5L0.5 11.5" fill="none" stroke="#6b6e71" stroke-width="1.3"/></svg>
<div class="b" style="left:249.4px;top:887.4px;width:104.2px;height:29.3px;background:#eaeef1;border-radius:3px;box-shadow:inset 0 0 0 1px #e3e7ea"></div>
<div class="b" style="left:254.70000000000002px;top:897.1999999999999px;width:2px;height:2px;background:#909396;border-radius:50%"></div>
<div class="b" style="left:254.70000000000002px;top:901.1999999999999px;width:2px;height:2px;background:#909396;border-radius:50%"></div>
<div class="b" style="left:254.70000000000002px;top:905.1999999999999px;width:2px;height:2px;background:#909396;border-radius:50%"></div>
<div class="t" style="left:264.10px;top:902.93px;font-size:17.8px;color:#4d5358;font-family:'Liberation Sans', sans-serif;transform:scaleX(0.9961);transform-origin:0 0;">channel</div>
<svg class="b" style="left:334.1px;top:896.6px" width="12" height="12" viewBox="0 0 12 12"><path d="M0.5 0.5L11.5 11.5M11.5 0.5L0.5 11.5" fill="none" stroke="#6b6e71" stroke-width="1.3"/></svg>
<div class="b" style="left:359.7px;top:887.4px;width:76.0px;height:29.3px;background:#eaeef1;border-radius:3px;box-shadow:inset 0 0 0 1px #e3e7ea"></div>
<div class="b" style="left:365.0px;top:897.1999999999999px;width:2px;height:2px;background:#909396;border-radius:50%"></div>
<div class="b" style="left:365.0px;top:901.1999999999999px;width:2px;height:2px;background:#909396;border-radius:50%"></div>
<div class="b" style="left:365.0px;top:905.1999999999999px;width:2px;height:2px;background:#909396;border-radius:50%"></div>
<div class="t" style="left:374.40px;top:902.93px;font-size:17.8px;color:#4d5358;font-family:'Liberation Sans', sans-serif;transform:scaleX(1.0077);transform-origin:0 0;">host</div>
<svg class="b" style="left:416.2px;top:896.6px" width="12" height="12" viewBox="0 0 12 12"><path d="M0.5 0.5L11.5 11.5M11.5 0.5L0.5 11.5" fill="none" stroke="#6b6e71" stroke-width="1.3"/></svg>
<div class="b" style="left:442.3px;top:887.4px;width:91.2px;height:29.3px;background:#eaeef1;border-radius:3px;box-shadow:inset 0 0 0 1px #e3e7ea"></div>
<div class="b" style="left:447.6px;top:897.1999999999999px;width:2px;height:2px;background:#909396;border-radius:50%"></div>
<div class="b" style="left:447.6px;top:901.1999999999999px;width:2px;height:2px;background:#909396;border-radius:50%"></div>
<div class="b" style="left:447.6px;top:905.1999999999999px;width:2px;height:2px;background:#909396;border-radius:50%"></div>
<div class="t" style="left:457.00px;top:902.93px;font-size:17.8px;color:#4d5358;font-family:'Liberation Sans', sans-serif;transform:scaleX(0.9922);transform-origin:0 0;">oemId</div>
<svg class="b" style="left:514.0px;top:896.6px" width="12" height="12" viewBox="0 0 12 12"><path d="M0.5 0.5L11.5 11.5M11.5 0.5L0.5 11.5" fill="none" stroke="#6b6e71" stroke-width="1.3"/></svg>
<div class="b" style="left:540.5px;top:887.4px;width:62.0px;height:29.3px;background:#eaeef1;border-radius:3px;box-shadow:inset 0 0 0 1px #e3e7ea"></div>
<div class="b" style="left:545.8px;top:897.1999999999999px;width:2px;height:2px;background:#909396;border-radius:50%"></div>
<div class="b" style="left:545.8px;top:901.1999999999999px;width:2px;height:2px;background:#909396;border-radius:50%"></div>
<div class="b" style="left:545.8px;top:905.1999999999999px;width:2px;height:2px;background:#909396;border-radius:50%"></div>
<div class="t" style="left:555.20px;top:902.93px;font-size:17.8px;color:#4d5358;font-family:'Liberation Sans', sans-serif;transform:scaleX(1.0049);transform-origin:0 0;">url</div>
<svg class="b" style="left:583.0px;top:896.6px" width="12" height="12" viewBox="0 0 12 12"><path d="M0.5 0.5L11.5 11.5M11.5 0.5L0.5 11.5" fill="none" stroke="#6b6e71" stroke-width="1.3"/></svg>
<div class="b" style="left:609px;top:887.4px;width:103.3px;height:29.3px;background:#eaeef1;border-radius:3px;box-shadow:inset 0 0 0 1px #e3e7ea"></div>
<div class="b" style="left:614.3px;top:897.1999999999999px;width:2px;height:2px;background:#909396;border-radius:50%"></div>
<div class="b" style="left:614.3px;top:901.1999999999999px;width:2px;height:2px;background:#909396;border-radius:50%"></div>
<div class="b" style="left:614.3px;top:905.1999999999999px;width:2px;height:2px;background:#909396;border-radius:50%"></div>
<div class="t" style="left:623.70px;top:902.93px;font-size:17.8px;color:#4d5358;font-family:'Liberation Sans', sans-serif;transform:scaleX(1.0309);transform-origin:0 0;">method</div>
<svg class="b" style="left:692.8px;top:896.6px" width="12" height="12" viewBox="0 0 12 12"><path d="M0.5 0.5L11.5 11.5M11.5 0.5L0.5 11.5" fill="none" stroke="#6b6e71" stroke-width="1.3"/></svg>
<div class="b" style="left:718.9px;top:887.4px;width:102.6px;height:29.3px;background:#eaeef1;border-radius:3px;box-shadow:inset 0 0 0 1px #e3e7ea"></div>
<div class="b" style="left:724.1999999999999px;top:897.1999999999999px;width:2px;height:2px;background:#909396;border-radius:50%"></div>
<div class="b" style="left:724.1999999999999px;top:901.1999999999999px;width:2px;height:2px;background:#909396;border-radius:50%"></div>
<div class="b" style="left:724.1999999999999px;top:905.1999999999999px;width:2px;height:2px;background:#909396;border-radius:50%"></div>
<div class="t" style="left:733.60px;top:902.93px;font-size:17.8px;color:#4d5358;font-family:'Liberation Sans', sans-serif;transform:scaleX(0.9704);transform-origin:0 0;">process</div>
<svg class="b" style="left:802.0px;top:896.6px" width="12" height="12" viewBox="0 0 12 12"><path d="M0.5 0.5L11.5 11.5M11.5 0.5L0.5 11.5" fill="none" stroke="#6b6e71" stroke-width="1.3"/></svg>
<div class="b" style="left:827.3px;top:887.4px;width:127.1px;height:29.3px;background:#eaeef1;border-radius:3px;box-shadow:inset 0 0 0 1px #e3e7ea"></div>
<div class="b" style="left:832.5999999999999px;top:897.1999999999999px;width:2px;height:2px;background:#909396;border-radius:50%"></div>
<div class="b" style="left:832.5999999999999px;top:901.1999999999999px;width:2px;height:2px;background:#909396;border-radius:50%"></div>
<div class="b" style="left:832.5999999999999px;top:905.1999999999999px;width:2px;height:2px;background:#909396;border-radius:50%"></div>
<div class="t" style="left:842.04px;top:902.93px;font-size:17.8px;color:#4d5358;font-family:'Liberation Sans', sans-serif;">workspace</div>
<svg class="b" style="left:934.9px;top:896.6px" width="12" height="12" viewBox="0 0 12 12"><path d="M0.5 0.5L11.5 11.5M11.5 0.5L0.5 11.5" fill="none" stroke="#6b6e71" stroke-width="1.3"/></svg>
</body></html>
